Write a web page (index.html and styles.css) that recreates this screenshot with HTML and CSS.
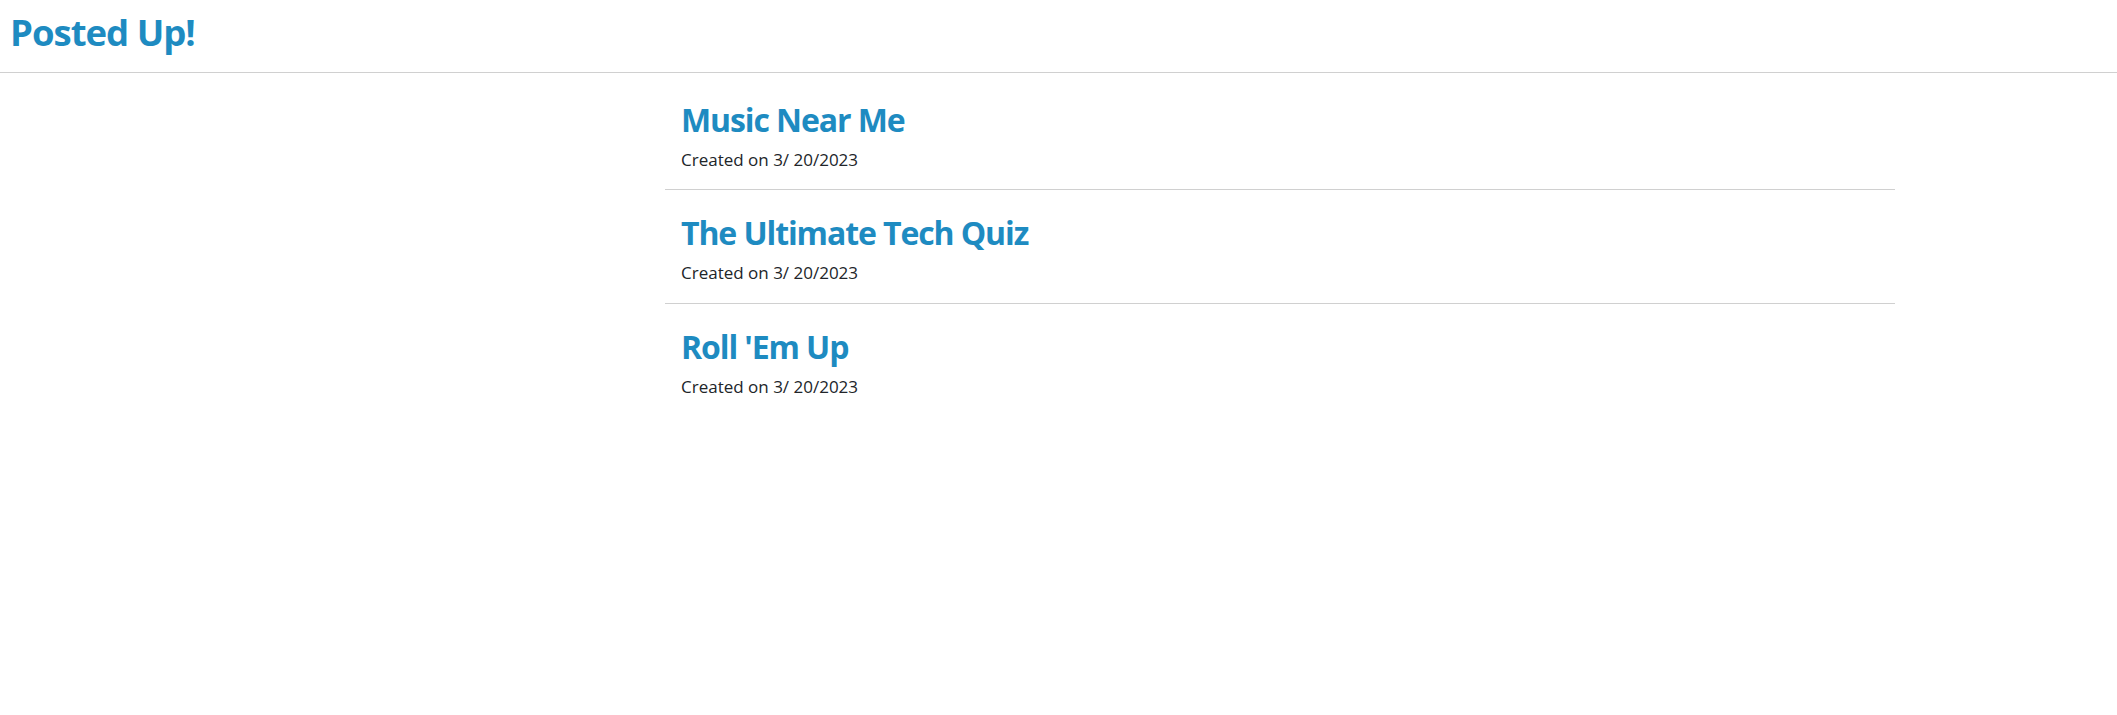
FILE: index.html
```html
<!DOCTYPE html>
<html>
<head>
<meta charset="utf-8">
<title>Posted Up!</title>
<link rel="stylesheet" href="styles.css">
</head>
<body>
<header class="topbar">
  <h1 class="brand">Posted Up!</h1>
</header>
<main class="page">
  <ul class="post-list">
    <li class="post">
      <h2 class="post-title">Music Near Me</h2>
      <p class="post-date">Created on 3/ 20/2023</p>
    </li>
    <li class="post">
      <h2 class="post-title">The Ultimate Tech Quiz</h2>
      <p class="post-date">Created on 3/ 20/2023</p>
    </li>
    <li class="post">
      <h2 class="post-title">Roll 'Em Up</h2>
      <p class="post-date">Created on 3/ 20/2023</p>
    </li>
  </ul>
</main>
</body>
</html>
```
FILE: styles.css
```css
* { box-sizing: border-box; }
html, body { margin: 0; padding: 0; background: #fff; }
body {
  font-family: "Open Sans", "Noto Sans", "Liberation Sans", sans-serif;
  color: #212529;
}
.topbar {
  height: 73px;
  border-bottom: 1px solid #d0d0d0;
  padding: 9px 10px 0;
}
.brand {
  margin: 0;
  font-size: 36.5px;
  line-height: 46px;
  font-weight: 700;
  letter-spacing: -1px;
  color: #1e8bc1;
}
.page {
  padding-left: 665px;
  padding-right: 222px;
}
.post-list {
  list-style: none;
  margin: 0;
  padding: 0;
}
.post {
  height: 114px;
  padding: 23px 16px 0;
  border-bottom: 1px solid #d0d0d0;
}
.post:first-child { padding-top: 27px; height: 117px; }
.post:last-child { border-bottom: none; }
.post-title {
  margin: 0;
  font-size: 32px;
  line-height: 40px;
  font-weight: 700;
  letter-spacing: -1.1px;
  color: #1e8bc1;
}
.post-date {
  margin: 8px 0 0;
  font-size: 17px;
  line-height: 24px;
}
```
